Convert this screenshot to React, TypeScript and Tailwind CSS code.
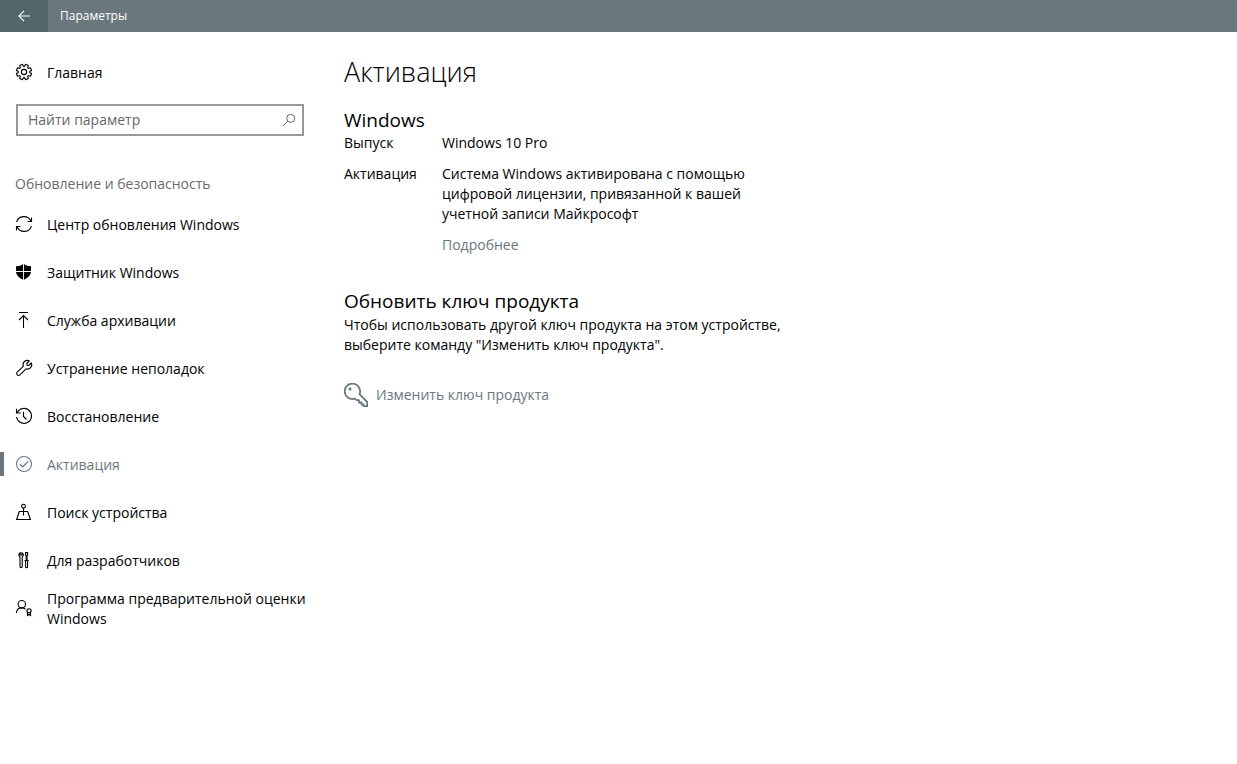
import type { ReactNode } from "react";

function Icon({ children }: { children: ReactNode }) {
  return (
    <svg
      viewBox="0 0 16 16"
      className="size-4 shrink-0 overflow-visible"
      fill="none"
      stroke="currentColor"
      strokeWidth="1.1"
      aria-hidden="true"
    >
      {children}
    </svg>
  );
}

function gearOutline(): string {
  const points: string[] = [];
  for (let i = 0; i < 8; i++) {
    const middle = (i * Math.PI) / 4 + Math.PI / 8;
    const corners: [number, number][] = [
      [-0.29, 5.7],
      [-0.19, 7.8],
      [0.19, 7.8],
      [0.29, 5.7],
    ];
    for (const [offset, radius] of corners) {
      const x = 8 + radius * Math.cos(middle + offset);
      const y = 8 + radius * Math.sin(middle + offset);
      points.push(`${x.toFixed(2)} ${y.toFixed(2)}`);
    }
  }
  return `M${points.join("L")}Z`;
}

const gearPath = gearOutline();

const items: { label: string; icon: ReactNode; active?: boolean }[] = [
  {
    label: "Центр обновления Windows",
    icon: (
      <>
        <path d="M.6 6.200A7.600 7.600 0 0 1 14.800 5M15.400 9.800A7.600 7.600 0 0 1 1.200 11" />
        <path d="M15.500 1.500V5.500H11.500M.5 14.500V10.500H4.500" />
      </>
    ),
  },
  {
    label: "Защитник Windows",
    icon: (
      <path
        stroke="none"
        fill="currentColor"
        d="M7.100 0V7H0V2.200C3 2.200 5.200 1.500 7.100 0ZM8 0C9.900 1.500 12 2.200 15 2.200V7H8ZM0 8H7.100V15.700C3 13.800.500 11.500 0 8ZM8 8H15C14.500 11.500 12 13.800 8 15.700Z"
      />
    ),
  },
  {
    label: "Служба архивации",
    icon: <path d="M3 .5H12M7.500 16V3.500M3 8L7.500 3.500L12 8" />,
  },
  {
    label: "Устранение неполадок",
    icon: (
      <path
        strokeLinejoin="round"
        d="M13.300.9A4.300 4.300 0 0 0 7.300 6.300L1.200 12.200A1.900 1.900 0 0 0 3.900 14.900L10 8.800A4.300 4.300 0 0 0 15.300 2.900L12.700 5.500L11 5.200L10.700 3.500Z"
      />
    ),
  },
  {
    label: "Восстановление",
    icon: (
      <>
        <path d="M1.200 4.800A7.500 7.500 0 1 1 .6 9" />
        <path d="M.5.800V5H4.800M7.500 3.800V8.500L10.500 11.500" />
      </>
    ),
  },
  {
    label: "Активация",
    active: true,
    icon: (
      <>
        <circle cx="8" cy="8" r="7.500" />
        <path strokeWidth="1.300" d="M4 8.200L6.700 10.900L12.200 5.400" />
      </>
    ),
  },
  {
    label: "Поиск устройства",
    icon: (
      <>
        <circle cx="7.500" cy="2.200" r="1.900" />
        <path d="M7.500 4.100V11.500M12 7.500H3.300L.6 15.500H14.400L11.700 7.500" />
      </>
    ),
  },
  {
    label: "Для разработчиков",
    icon: (
      <>
        <path d="M4.200.8A2.300 2.300 0 0 0 4 4.900V14.500A1 1 0 0 0 6.200 14.500V4.900A2.300 2.300 0 0 0 5.900.8V3H4.200Z" />
        <path d="M9.600.6H11.600V3L11 4V8.500H10.200V4L9.600 3ZM8.500 8.500H12.700M9.600 8.500V14.700A1 1 0 0 0 11.600 14.700V8.500" />
      </>
    ),
  },
  {
    label: "Программа предварительной оценки Windows",
    icon: (
      <>
        <circle cx="5.800" cy="4.200" r="3.700" />
        <path d="M.4 13C.6 10 2.800 7.900 5.800 7.900C7.300 7.900 8.500 8.400 9.500 9.200" />
        <circle cx="13" cy="10.800" r="2.100" />
        <path d="M11.500 12.300V15.500L13 14.500L14.500 15.500V12.300" />
      </>
    ),
  },
];

export default function App() {
  return (
    <div className="flex min-h-screen flex-col bg-white font-['Open_Sans','Noto_Sans',sans-serif] text-sm leading-5 text-black">
      <header className="flex h-8 items-stretch bg-[#6a787d] text-white">
        <button type="button" aria-label="Назад" className="flex w-12 items-center justify-center bg-[#53666c]">
          <svg viewBox="0 0 12 12" className="size-3" fill="none" stroke="currentColor" strokeWidth="1.2" aria-hidden="true">
            <path d="M12 6H.8M6 .8L.8 6L6 11.200" />
          </svg>
        </button>
        <span className="flex items-center pl-3 text-xs">Параметры</span>
      </header>

      <div className="flex flex-1">
        <aside className="w-80 shrink-0 pt-4">
          <a href="#home" className="flex h-12 items-center gap-[15px] px-4">
            <Icon>
              <path d={gearPath} strokeLinejoin="round" />
              <circle cx="8" cy="8" r="2.600" />
            </Icon>
            <span className="pt-0.5">Главная</span>
          </a>
          <div className="mx-4 mt-2 flex h-8 items-center border-2 border-[#999] pr-[7px] pl-2.5">
            <input
              type="text"
              aria-label="Найти параметр"
              placeholder="Найти параметр"
              className="min-w-0 flex-1 bg-transparent outline-none placeholder:text-[#666]"
            />
            <svg viewBox="0 0 12 12" className="size-3 overflow-visible text-[#666]" fill="none" stroke="currentColor" aria-hidden="true">
              <circle cx="7.700" cy="4.300" r="4" />
              <path d="M4.900 7.100L0 12" />
            </svg>
          </div>
          <nav aria-labelledby="section-title" className="pt-9">
            <h2 id="section-title" className="px-[15px] pt-0.5 pb-1.5 text-[#6b6b6b]">
              Обновление и безопасность
            </h2>
            <ul>
              {items.map(({ label, icon, active }) => (
                <li key={label}>
                  <a
                    href="#section"
                    aria-current={active ? "page" : undefined}
                    className={
                      active
                        ? "flex h-12 items-center text-[#6a787d]"
                        : "flex h-12 items-center"
                    }
                  >
                    <span className={active ? "h-6 w-1 bg-[#6a787d]" : "h-6 w-1"} />
                    <span className="flex flex-1 items-center gap-[15px] pr-2 pl-3">
                      <Icon>{icon}</Icon>
                      <span className="pt-0.5">{label}</span>
                    </span>
                  </a>
                </li>
              ))}
            </ul>
          </nav>
        </aside>

        <main className="min-w-0 flex-1 px-6 pt-5">
          <h1 className="text-[27px] leading-10 font-light">Активация</h1>

          <section className="pt-4">
            <h2 className="text-[19px] leading-6">Windows</h2>
            <dl className="grid max-w-md grid-cols-[82px_1fr] gap-x-4 gap-y-[11px] pt-px">
              <dt>Выпуск</dt>
              <dd>Windows 10 Pro</dd>
              <dt>Активация</dt>
              <dd>
                Система Windows активирована с помощью
                <br />
                цифровой лицензии, привязанной к вашей
                <br />
                учетной записи Майкрософт
              </dd>
              <dd className="col-start-2">
                <a href="#more" className="text-[#6a787d]">Подробнее</a>
              </dd>
            </dl>
          </section>

          <section className="pt-[34px]">
            <h2 className="text-[19px] leading-6">Обновить ключ продукта</h2>
            <p className="pt-0.5">
              Чтобы использовать другой ключ продукта на этом устройстве,
              <br />
              выберите команду "Изменить ключ продукта".
            </p>
            <a href="#change-key" className="mt-7 inline-flex items-center gap-2 text-[#6a787d]">
              <svg viewBox="0 0 24 24" className="size-6" fill="none" stroke="currentColor" strokeWidth="1.800" strokeLinejoin="round" aria-hidden="true">
                <path d="M15.500 11.200A7.700 7.700 0 1 0 10.800 15.600L12.600 17.200H15V19.500H17.500V21.500H19.500V23.200H23.200V19Z" />
                <circle cx="6" cy="6" r="1.500" fill="currentColor" stroke="none" />
              </svg>
              Изменить ключ продукта
            </a>
          </section>
        </main>
      </div>
    </div>
  );
}
